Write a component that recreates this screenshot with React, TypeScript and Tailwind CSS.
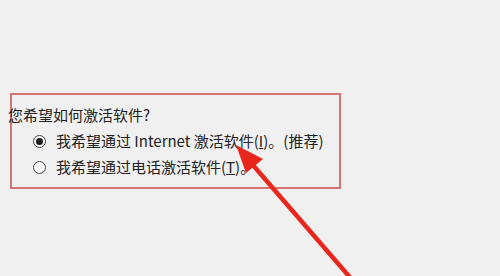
import React from "react";

export default function App() {
  return (
    <div
      className="relative w-[500px] h-[276px] overflow-hidden bg-[#f0f0f0] text-[#222]"
      style={{ fontFamily: '"Noto Sans CJK SC", "Noto Sans", sans-serif' }}
    >
      <div className="pt-[93px] pl-[10px]">
        <div className="w-[331px] h-[96px] border-2 border-[#d97272] flex flex-col">
          <div className="mt-[10px] -ml-[4px] text-[15px] leading-[20px]">您希望如何激活软件?</div>
          <div className="mt-[6px] flex flex-col gap-[6px] pl-[21px]">
            <div className="flex items-center h-[20px] text-[15px] leading-[20px]">
              <span className="w-[13px] h-[13px] rounded-full border border-[#444] flex items-center justify-center bg-[#f8f8f8]">
                <span className="w-[7px] h-[7px] rounded-full bg-[#1e1e1e]" />
              </span>
              <span className="ml-[10px] whitespace-nowrap">
                我希望通过 Internet 激活软件(<u>I</u>)。(推荐)
              </span>
            </div>
            <div className="flex items-center h-[20px] text-[15px] leading-[20px]">
              <span className="w-[13px] h-[13px] rounded-full border border-[#444] bg-[#f8f8f8]" />
              <span className="ml-[10px] whitespace-nowrap">
                我希望通过电话激活软件(<u>T</u>)。
              </span>
            </div>
          </div>
        </div>
      </div>
      <svg className="absolute left-0 top-0" width="500" height="276" viewBox="0 0 500 276">
        <line x1="252" y1="164" x2="354" y2="282" stroke="#e8261b" strokeWidth="4.5" />
        <polygon points="236,145 246,173 263,159" fill="#e8261b" />
      </svg>
    </div>
  );
}
